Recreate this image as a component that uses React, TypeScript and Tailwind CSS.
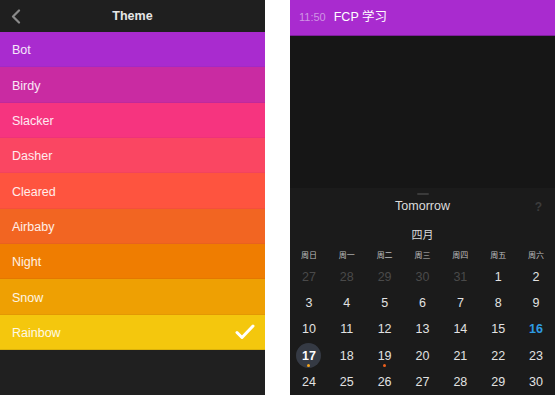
import React from "react";

const themes: { name: string; color: string; border: string }[] = [
  { name: "Bot", color: "bg-[#a92bcf]", border: "border-[#a22ac6]" },
  { name: "Birdy", color: "bg-[#c92ba2]", border: "border-[#c0299b]" },
  { name: "Slacker", color: "bg-[#f6347f]", border: "border-[#ee327a]" },
  { name: "Dasher", color: "bg-[#fa4662]", border: "border-[#f2435e]" },
  { name: "Cleared", color: "bg-[#fe543f]", border: "border-[#f4503c]" },
  { name: "Airbaby", color: "bg-[#f26522]", border: "border-[#e96120]" },
  { name: "Night", color: "bg-[#ef7d01]", border: "border-[#e47701]" },
  { name: "Snow", color: "bg-[#eea003]", border: "border-[#e39803]" },
  { name: "Rainbow", color: "bg-[#f4c70d]", border: "border-[#dcb20b]" },
];

const weekdays = ["周日", "周一", "周二", "周三", "周四", "周五", "周六"];

type Day = { n: number; muted?: boolean; today?: boolean; selected?: boolean; dot?: string };

const weeks: Day[][] = [
  [{ n: 27, muted: true }, { n: 28, muted: true }, { n: 29, muted: true }, { n: 30, muted: true }, { n: 31, muted: true }, { n: 1 }, { n: 2 }],
  [{ n: 3 }, { n: 4 }, { n: 5 }, { n: 6 }, { n: 7 }, { n: 8 }, { n: 9 }],
  [{ n: 10 }, { n: 11 }, { n: 12 }, { n: 13 }, { n: 14 }, { n: 15 }, { n: 16, today: true }],
  [{ n: 17, selected: true, dot: "bg-[#f2a31d]" }, { n: 18 }, { n: 19, dot: "bg-[#ec5f1c]" }, { n: 20 }, { n: 21 }, { n: 22 }, { n: 23 }],
  [{ n: 24 }, { n: 25 }, { n: 26 }, { n: 27 }, { n: 28 }, { n: 29 }, { n: 30 }],
];

function ThemePanel() {
  return (
    <div className="w-[265px] h-full bg-[#202020] flex flex-col">
      <div className="h-[32px] bg-[#1f1f1f] relative flex items-center justify-center">
        <svg className="absolute left-[11px] top-[9px]" width="10" height="15" viewBox="0 0 10 15">
          <polyline points="8,1.5 2,7.5 8,13.5" fill="none" stroke="#8a8a8a" strokeWidth="2.2" strokeLinecap="round" strokeLinejoin="round" />
        </svg>
        <span className="text-[12.5px] font-semibold text-[#e6e6e6]">Theme</span>
      </div>
      {themes.map((t) => (
        <div
          key={t.name}
          className={`h-[35.33px] ${t.color} flex items-center justify-between pl-[12px] pr-[10px] pt-[3px] border-b ${t.border}`}
        >
          <span className="text-[12.5px] text-white/90">{t.name}</span>
          {t.name === "Rainbow" && (
            <svg width="20" height="16" viewBox="0 0 20 16" className="mb-[2px]">
              <polyline points="2,8.5 7,13.5 18,2" fill="none" stroke="#ffffff" strokeWidth="3" strokeLinecap="round" strokeLinejoin="round" />
            </svg>
          )}
        </div>
      ))}
    </div>
  );
}

function CalendarPanel() {
  return (
    <div className="w-[265px] h-full bg-[#161616] flex flex-col">
      <div className="h-[36px] bg-[#a92bcf] border-b border-[#7f1f9c] flex items-center pl-[9px] gap-[8px]">
        <span className="text-[11px] text-[#cf94e4]">11:50</span>
        <span className="text-[12.5px] text-white" style={{ fontFamily: '"Liberation Sans", "Noto Sans CJK SC", sans-serif' }}>
          FCP 学习
        </span>
      </div>
      <div className="flex-1" />
      <div className="h-[207px] bg-[#1b1b1b] flex flex-col">
        <div className="flex justify-center pt-[5px]">
          <div className="w-[12px] h-[2px] rounded-full bg-[#3a3a3a]" />
        </div>
        <div className="h-[23px] pt-[1px] relative flex items-center justify-center">
          <span className="text-[12.5px] text-[#dcdcdc]">Tomorrow</span>
          <span className="absolute right-[13px] text-[12px] font-bold text-[#3c3c3c]">?</span>
        </div>
        <div className="h-[29px] pt-[5px] flex items-center justify-center">
          <span className="text-[11px] text-[#dcdcdc]" style={{ fontFamily: '"Noto Sans CJK SC", sans-serif' }}>四月</span>
        </div>
        <div className="h-[17px] pt-[1px] grid grid-cols-7 items-center">
          {weekdays.map((w) => (
            <span key={w} className="text-[8px] text-[#bdbdbd] text-center" style={{ fontFamily: '"Noto Sans CJK SC", sans-serif' }}>
              {w}
            </span>
          ))}
        </div>
        {weeks.map((wk, i) => (
          <div key={i} className="h-[27px] grid grid-cols-7">
            {wk.map((d, j) => (
              <div key={j} className="relative flex items-center justify-center pt-[2px]">
                {d.selected && <div className="absolute top-[1px] w-[25px] h-[25px] rounded-full bg-[#353a44]" />}
                <span
                  className={`relative text-[12.5px] ${
                    d.muted
                      ? "text-[#4a4a4a]"
                      : d.today
                      ? "text-[#2e9be2] font-bold"
                      : d.selected
                      ? "text-white font-bold"
                      : "text-[#e2e2e2]"
                  }`}
                >
                  {d.n}
                </span>
                {d.dot && <div className={`absolute top-[22px] w-[3px] h-[3px] rounded-full ${d.dot}`} />}
              </div>
            ))}
          </div>
        ))}
      </div>
    </div>
  );
}

export default function App() {
  return (
    <div
      className="w-[555px] h-[395px] bg-white flex gap-[25px] overflow-hidden"
      style={{ fontFamily: '"Liberation Sans", "Noto Sans CJK SC", sans-serif' }}
    >
      <ThemePanel />
      <CalendarPanel />
    </div>
  );
}
